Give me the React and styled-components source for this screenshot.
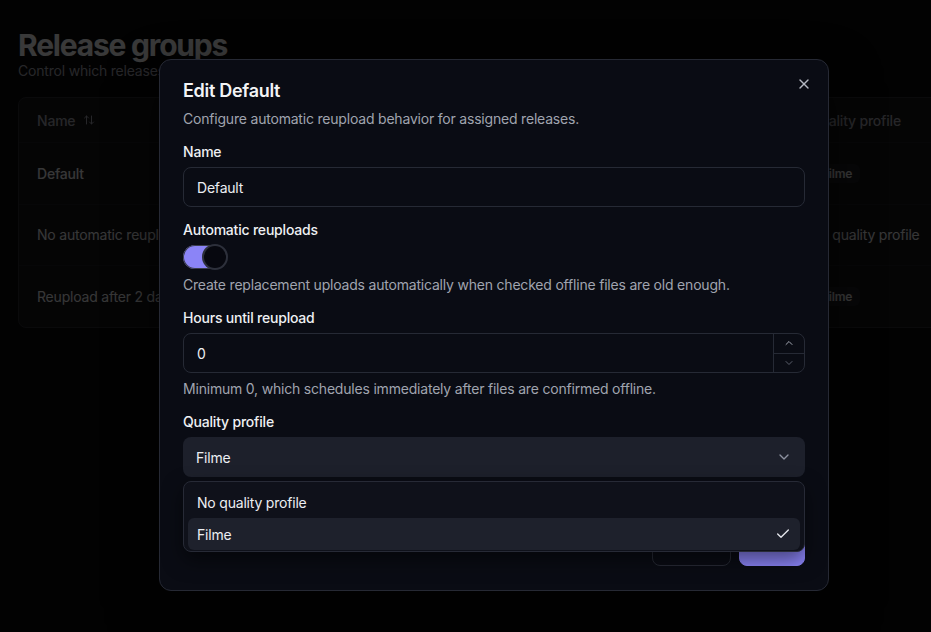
import { createGlobalStyle } from 'styled-components'
import styled from 'styled-components'
import { ArrowUpDown, X, ChevronDown, ChevronUp, Check } from 'lucide-react'

const GlobalStyle = createGlobalStyle`
  html, body {
    margin: 0;
    background: #0a0a0b;
    font-family: Inter, 'Noto Sans', sans-serif;
    overflow: hidden;
  }
  * { box-sizing: border-box; }
`

const Page = styled.div`
  position: relative;
  width: 931px;
  height: 632px;
  padding: 29px 18px 0;
  overflow: hidden;
  letter-spacing: -0.2px;
`

const PageTitle = styled.h1`
  margin: 0;
  font-size: 30px;
  line-height: 32px;
  font-weight: 700;
  letter-spacing: -1.2px;
  color: #ececee;
`

const PageSubtitle = styled.p`
  margin: 0;
  font-size: 14px;
  line-height: 20px;
  color: #a1a1aa;
`

const TableCard = styled.div`
  margin-top: 16px;
  width: 1000px;
  border: 1px solid #2a2a2e;
  border-radius: 8px;
  background: #151518;
`

const TableRow = styled.div`
  display: grid;
  grid-template-columns: 773px 1fr;
  align-items: center;
  height: ${(p) => (p.$head ? '44px' : '61.5px')};
  padding: 0 18px;
  font-size: 14px;
  color: ${(p) => (p.$head ? '#a1a1aa' : '#e4e4e7')};
  font-weight: ${(p) => (p.$head ? 500 : 400)};
  border-top: ${(p) => (p.$head ? 'none' : '1px solid #202024')};
`

const HeadCell = styled.span`
  display: inline-flex;
  align-items: center;
  gap: 8px;
`

const Badge = styled.span`
  justify-self: start;
  margin-left: 4px;
  padding: 2px 8px;
  border-radius: 6px;
  font-size: 12px;
  font-weight: 600;
  color: #e4e4e7;
  background: #1f1f23;
`

const Overlay = styled.div`
  position: absolute;
  inset: 0;
  background: rgba(0, 0, 0, 0.76);
`

const Dialog = styled.div`
  position: absolute;
  left: 159px;
  top: 59px;
  width: 670px;
  padding: 21px 23px 24px;
  border: 1px solid #262934;
  border-radius: 12px;
  background: #0a0c14;
  box-shadow: 0 20px 50px rgba(0, 0, 0, 0.6);
`

const CloseButton = styled.button`
  position: absolute;
  top: 16px;
  right: 16px;
  display: flex;
  padding: 0;
  border: 0;
  background: none;
  color: #b4b8c2;
`

const DialogTitle = styled.h2`
  margin: 0;
  font-size: 18px;
  line-height: 20px;
  font-weight: 600;
  letter-spacing: -0.3px;
  color: #f3f4f6;
`

const Hint = styled.p`
  margin: ${(p) => p.$top || '6px'} 0 0;
  font-size: 14px;
  line-height: 20px;
  color: #a0a4af;
`

const Field = styled.div`
  position: relative;
  margin-top: 13px;
  display: flex;
  flex-direction: column;
`

const Label = styled.label`
  font-size: 14px;
  line-height: 20px;
  font-weight: 500;
  color: #eef0f3;
  margin-bottom: 5px;
`

const Input = styled.div`
  display: flex;
  align-items: center;
  height: 40px;
  padding-left: 13px;
  border: 1px solid #262a35;
  border-radius: 8px;
  font-size: 14px;
  color: #eceef2;
`

const NumberInput = styled(Input)`
  padding-left: 0;
  overflow: hidden;
`

const NumberValue = styled.span`
  flex: 1;
  padding-left: 13px;
`

const Stepper = styled.div`
  display: flex;
  flex-direction: column;
  width: 31px;
  height: 100%;
  border-left: 1px solid #262a35;
`

const StepButton = styled.div`
  flex: 1;
  display: flex;
  align-items: center;
  justify-content: center;
  color: ${(p) => (p.$dim ? '#5b5f6c' : '#a3a7b2')};
  border-top: ${(p) => (p.$dim ? '1px solid #262a35' : 'none')};
`

const Switch = styled.div`
  display: flex;
  align-items: center;
  justify-content: flex-end;
  width: 44px;
  height: 24px;
  padding: 1px;
  border-radius: 12px;
  background: #8b84f7;
  box-shadow: inset 0 0 0 1px #3a3d4a;
`

const Thumb = styled.span`
  width: 22px;
  height: 22px;
  border-radius: 50%;
  background: #07080f;
  box-shadow: 0 0 0 2px #2d303b;
`

const Select = styled.div`
  display: flex;
  align-items: center;
  justify-content: space-between;
  height: 40px;
  padding: 0 13px;
  border-radius: 8px;
  background: #1d202b;
  font-size: 14px;
  color: #eceef2;

  svg { color: #8d91a0; }
`

const Menu = styled.div`
  position: absolute;
  left: 0;
  right: 0;
  top: calc(100% + 4px);
  z-index: 2;
  padding: 4px 4px 1px;
  border: 1px solid #272a36;
  border-radius: 8px;
  background: #0f111a;
  box-shadow: 0 8px 20px rgba(0, 0, 0, 0.5);
`

const MenuItem = styled.div`
  display: flex;
  align-items: center;
  justify-content: space-between;
  height: 32px;
  padding: 0 9px;
  border-radius: 6px;
  font-size: 14px;
  color: #eceef2;
  background: ${(p) => (p.$active ? '#1e212c' : 'transparent')};

  svg { color: #e6e8ee; }
`

const Footer = styled.div`
  display: flex;
  justify-content: flex-end;
  gap: 8px;
  margin-top: 47px;
`

const Button = styled.button`
  height: 42px;
  padding: 0 16px;
  border-radius: 8px;
  font-family: inherit;
  font-size: 14px;
  font-weight: 500;
  letter-spacing: -0.2px;
  border: 1px solid ${(p) => (p.$primary ? '#8b84f7' : '#272a35')};
  background: ${(p) => (p.$primary ? '#8b84f7' : 'transparent')};
  color: ${(p) => (p.$primary ? '#0a0c14' : '#eceef2')};
`

const rows = [
  { name: 'Default', profile: 'Filme' },
  { name: 'No automatic reuploads', profile: null },
  { name: 'Reupload after 2 days', profile: 'Filme' },
]

const App = () => {
  return (
    <Page>
      <GlobalStyle />
      <PageTitle>Release groups</PageTitle>
      <PageSubtitle>Control which releases are reuploaded.</PageSubtitle>
      <TableCard>
        <TableRow $head>
          <HeadCell>
            Name <ArrowUpDown size={12} />
          </HeadCell>
          <span>Quality profile</span>
        </TableRow>
        {rows.map((row) => (
          <TableRow key={row.name}>
            <span style={{ fontWeight: row.name === 'Default' ? 500 : 400 }}>{row.name}</span>
            {row.profile ? <Badge>{row.profile}</Badge> : <span>No quality profile</span>}
          </TableRow>
        ))}
      </TableCard>

      <Overlay />

      <Dialog>
        <CloseButton>
          <X size={16} strokeWidth={2} />
        </CloseButton>
        <DialogTitle>Edit Default</DialogTitle>
        <Hint $top='8px'>Configure automatic reupload behavior for assigned releases.</Hint>

        <Field>
          <Label>Name</Label>
          <Input>Default</Input>
        </Field>

        <Field>
          <Label>Automatic reuploads</Label>
          <Switch>
            <Thumb />
          </Switch>
          <Hint>Create replacement uploads automatically when checked offline files are old enough.</Hint>
        </Field>

        <Field>
          <Label>Hours until reupload</Label>
          <NumberInput>
            <NumberValue>0</NumberValue>
            <Stepper>
              <StepButton>
                <ChevronUp size={12} />
              </StepButton>
              <StepButton $dim>
                <ChevronDown size={12} />
              </StepButton>
            </Stepper>
          </NumberInput>
          <Hint>Minimum 0, which schedules immediately after files are confirmed offline.</Hint>
        </Field>

        <Field>
          <Label>Quality profile</Label>
          <Select>
            Filme
            <ChevronDown size={16} />
          </Select>
          <Menu>
            <MenuItem>No quality profile</MenuItem>
            <MenuItem $active>
              Filme
              <Check size={16} />
            </MenuItem>
          </Menu>
        </Field>

        <Footer>
          <Button>Cancel</Button>
          <Button $primary>Save</Button>
        </Footer>
      </Dialog>
    </Page>
  )
}

export default App
